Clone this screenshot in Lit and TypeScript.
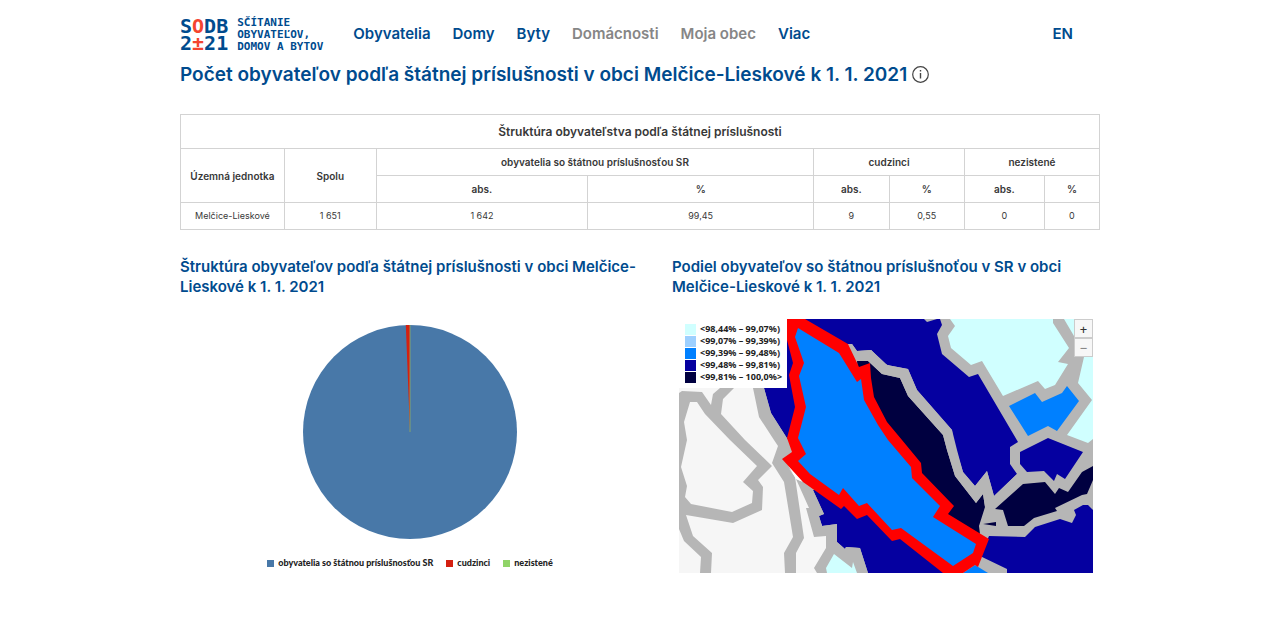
import { LitElement, html, svg, css } from "lit";
import { customElement } from "lit/decorators.js";

const NAV = [
  { label: "Obyvatelia", muted: false },
  { label: "Domy", muted: false },
  { label: "Byty", muted: false },
  { label: "Domácnosti", muted: true },
  { label: "Moja obec", muted: true },
  { label: "Viac", muted: false },
];

const SERIES = [
  { label: "obyvatelia so štátnou príslušnosťou SR", color: "#4878a8" },
  { label: "cudzinci", color: "#d42010" },
  { label: "nezistené", color: "#90d468" },
];

const CLASSES = [
  { label: "<98,44% – 99,07%)", color: "#d0ffff" },
  { label: "<99,07% – 99,39%)", color: "#9dd0ff" },
  { label: "<99,39% – 99,48%)", color: "#0080ff" },
  { label: "<99,48% – 99,81%)", color: "#0500a0" },
  { label: "<99,81% – 100,0%>", color: "#000040" },
];

// Municipality areas, painted over the border colour in this order.
const AREAS: { fill: string; points: string }[] = [
  { fill: "#f6f6f6", points: "679,388 759,388 765,415 784,445 778,458 803,483 812,510 826,530 832,545 820,573 679,573" },
  { fill: "#0500a0", points: "764,319 940,319 942,325 937,334 942,354 969,377 978,374 1018,442 1010,447 1010,464 1017,474 994,496 987,471 975,486 963,472 953,440 952,430 917,390 908,369 887,365 871,350 857,351 852,344 840,344 800,460 790,443 771,413 764,388" },
  { fill: "#0500a0", points: "813,490 850,490 960,573 868,573 860,548 846,547 845,549 837,542 837,524 822,526 819,516 824,514" },
  { fill: "#b6b6b6", points: "846,344 852,344 857,351 871,350 883,363 890,366 890,378 850,362" },
  { fill: "#000040", points: "857,361 868,361 882,374 900,378 908,396 943,435 947,450 955,476 976,503 983,494 985,507 979,526 980,534 945,520 860,390" },
  { fill: "#b6b6b6", points: "871,350 887,365 908,369 917,390 952,430 957,450 963,472 975,486 987,471 994,496 1017,474 1024,480 1023,484 995,509 985,507 983,494 976,503 955,476 947,450 943,435 908,396 900,378 882,374 868,361" },
  { fill: "#b6b6b6", points: "759,388 764,388 771,413 790,443 792,450 783,460 795,477 804,538 796,553 796,573 785,573 784,553 793,537 784,482 772,463 778,446 774,440 759,417 753,388" },
  { fill: "#b6b6b6", points: "796,479 803,482 813,490 824,514 819,516 822,526 837,524 837,542 845,549 846,547 860,548 868,573 857,573 853,562 852,568 834,554 826,568 827,573 817,573 814,568 826,548 826,536 814,537 806,508 809,508" },
  { fill: "#d0ffff", points: "834,554 852,568 853,562 857,573 827,573 826,568" },
  { fill: "#b6b6b6", points: "679,393 682,391 702,392 711,405 713,394 720,388 734,388 723,399 721,414 745,440 772,466 758,480 763,487 762,510 733,523 686,515 693,536 712,553 711,573 700,573 701,557 684,541 679,529" },
  { fill: "#f6f6f6", points: "690,402 697,402 705,414 730,440 757,466 743,482 753,491 752,503 732,512 691,504 685,497 687,486 681,467 687,440 684,422" },
  { fill: "#d0ffff", points: "950,319 955,326 948,336 951,348 971,365 982,361 1003,396 1038,381 1045,389 1055,385 1068,364 1058,362 1069,348 1053,323 1053,319" },
  { fill: "#d0ffff", points: "1064,319 1074,336 1084,357 1078,383 1092,400 1067,435 1088,443 1093,439 1093,319" },
  { fill: "#0080ff", points: "1009,406 1035,393 1042,402 1062,393 1067,386 1079,401 1057,431 1048,426 1028,436" },
  { fill: "#0500a0", points: "1020,452 1048,438 1083,452 1065,479 1057,474 1054,481 1044,471 1027,472 1020,464" },
  { fill: "#000040", points: "995,509 1023,484 1045,482 1055,494 1059,488 1068,492 1082,472 1093,466 1093,480 1087,494 1082,495 1055,508 1057,511 1034,518 1024,526 1008,526 1003,510" },
  { fill: "#000040", points: "983,524 996,522 996,526" },
  { fill: "#0500a0", points: "989,536 1025,537 1035,527 1060,519 1072,523 1076,515 1074,510 1083,505 1088,505 1093,510 1093,573 1007,573 1007,569 980,556" },
  { fill: "#b6b6b6", points: "924,319 927,322 937,319" },
  { fill: "#0080ff", points: "963,573 975,565 988,573" },
  { fill: "#ffffff", points: "785,460 803,482 796,479" },
  { fill: "#ff0000", points: "787,319 805,319 848,344 859,367 870,363 871,378 874,397 887,422 902,440 921,463 922,473 954,506 948,514 989,539 978,567 975,565 963,573 943,573 900,539 892,541 867,515 857,519 844,506 841,509 803,482 782,459 792,452 787,438 795,407 789,375 793,363 787,340" },
  { fill: "#0080ff", points: "798,328 839,353 857,382 861,379 864,400 878,425 888,440 911,467 912,478 940,506 933,517 976,544 973,553 953,566 901,528 892,530 867,503 859,506 843,488 839,495 810,474 798,461 806,454 798,438 806,407 799,376 804,363 795,337" },
];

@customElement("app-root")
export class AppRoot extends LitElement {
  static styles = css`
    :host {
      display: block;
      font-family: Inter, "Noto Sans", sans-serif;
      color: #383838;
      background: #fff;
    }
    .page {
      max-width: 920px;
      margin: 0 auto;
    }
    a {
      color: inherit;
      text-decoration: none;
    }
    header {
      display: flex;
      align-items: center;
      height: 62px;
      padding: 4px 27px 0 0;
      box-sizing: border-box;
      color: #004b8e;
      font-size: 15px;
      font-weight: 600;
    }
    .logo {
      display: flex;
      align-items: center;
      gap: 9px;
      padding-top: 4px;
      font-family: "DejaVu Sans Mono", monospace;
      font-weight: 700;
      white-space: nowrap;
    }
    .mark {
      font-size: 20px;
      line-height: 17px;
    }
    .accent {
      color: #f4452f;
    }
    .slogan {
      font-size: 11px;
      line-height: 12px;
    }
    nav {
      display: flex;
      flex: 1;
      gap: 22px;
      margin-left: 30px;
    }
    .muted {
      color: #868686;
    }
    .title {
      display: flex;
      align-items: center;
      gap: 5px;
      margin: 0 0 27px;
      height: 25px;
    }
    h1 {
      margin: 0;
      font-size: 19px;
      line-height: 25px;
      font-weight: 600;
      color: #004b8e;
    }
    .info {
      display: flex;
      padding: 0;
      border: 0;
      background: none;
    }
    table {
      width: 100%;
      table-layout: fixed;
      border-collapse: collapse;
      font-size: 10px;
      line-height: 12px;
      text-align: center;
    }
    th,
    td {
      height: 26px;
      padding: 0;
      border: 1px solid #d3d3d3;
    }
    td {
      font-size: 9px;
    }
    th {
      font-weight: 600;
    }
    .caption {
      height: 33px;
      font-size: 12px;
    }
    .w-unit { width: 11.3%; }
    .w-total { width: 10%; }
    .w-sr-abs { width: 23%; }
    .w-sr-pct { width: 24.6%; }
    .w-for-abs { width: 8.2%; }
    .w-for-pct { width: 8.2%; }
    .w-unk-abs { width: 8.7%; }
    .w-unk-pct { width: 6%; }
    .charts {
      display: grid;
      grid-template-columns: 1fr 1fr;
      margin-top: 27px;
    }
    .right {
      padding-left: 32px;
    }
    h2 {
      margin: 0 0 22px;
      font-size: 15px;
      line-height: 20px;
      font-weight: 600;
      color: #004b8e;
    }
    .chart {
      padding-top: 6px;
    }
    .pie {
      display: block;
      width: 214px;
      margin: 0 auto 18px;
    }
    .legend {
      display: flex;
      justify-content: center;
      gap: 13px;
      margin: 0;
      padding: 0;
      list-style: none;
      font: 900 9px/12px Lato, "Noto Sans", sans-serif;
      color: #222;
      white-space: nowrap;
    }
    .legend li {
      display: flex;
      align-items: center;
      gap: 4px;
    }
    .swatch {
      width: 7px;
      height: 7px;
    }
    .map {
      position: relative;
      margin: 0 7px;
    }
    .canvas {
      display: block;
      width: 100%;
    }
    .classes {
      position: absolute;
      top: 0;
      left: 0;
      margin: 0;
      padding: 4px 5px 5px 6px;
      list-style: none;
      background: #fff;
      font: 700 9px/12px "Noto Sans", sans-serif;
      color: #222;
      white-space: nowrap;
    }
    .classes li {
      display: flex;
      align-items: center;
      gap: 4px;
    }
    .box {
      width: 11px;
      height: 11px;
    }
    .zoom {
      position: absolute;
      top: 0;
      right: 0;
      display: flex;
      flex-direction: column;
    }
    .zoom button {
      display: flex;
      align-items: center;
      justify-content: center;
      width: 19px;
      height: 19px;
      padding: 0;
      border: 1px solid #ccc;
      background: #f7f7f7;
      color: #333;
      font: 500 13px/16px "Noto Sans", sans-serif;
    }
    .zoom .off {
      color: #888;
    }
  `;

  render() {
    return html`
      <div class="page">
        <header>
          <a class="logo" href="#">
            <span class="mark">S<span class="accent">O</span>DB<br />2<span class="accent">±</span>21</span>
            <span class="slogan">SČÍTANIE<br />OBYVATEĽOV,<br />DOMOV A BYTOV</span>
          </a>
          <nav>
            ${NAV.map((n) => html`<a href="#" class=${n.muted ? "muted" : ""}>${n.label}</a>`)}
          </nav>
          <a href="#">EN</a>
        </header>
        <main>
          <div class="title">
            <h1>Počet obyvateľov podľa štátnej príslušnosti v obci Melčice-Lieskové k 1. 1. 2021</h1>
            <button class="info" aria-label="Info">
              <svg width="17" height="17" viewBox="0 0 17 17" fill="none" stroke="#444">
                <circle cx="8.5" cy="8.5" r="7.8" stroke-width="1.2" />
                <path d="M8.5 7v5.5M8.5 4v1.6" stroke-width="1.4" />
              </svg>
            </button>
          </div>
          <table>
            <colgroup>
              <col class="w-unit" /><col class="w-total" /><col class="w-sr-abs" /><col class="w-sr-pct" />
              <col class="w-for-abs" /><col class="w-for-pct" /><col class="w-unk-abs" /><col class="w-unk-pct" />
            </colgroup>
            <thead>
              <tr><th class="caption" colspan="8">Štruktúra obyvateľstva podľa štátnej príslušnosti</th></tr>
              <tr>
                <th rowspan="2">Územná jednotka</th>
                <th rowspan="2">Spolu</th>
                <th colspan="2">obyvatelia so štátnou príslušnosťou SR</th>
                <th colspan="2">cudzinci</th>
                <th colspan="2">nezistené</th>
              </tr>
              <tr>${["abs.", "%", "abs.", "%", "abs.", "%"].map((t) => html`<th>${t}</th>`)}</tr>
            </thead>
            <tbody>
              <tr>
                ${["Melčice-Lieskové", "1 651", "1 642", "99,45", "9", "0,55", "0", "0"].map((t) => html`<td>${t}</td>`)}
              </tr>
            </tbody>
          </table>
          <div class="charts">
            <section>
              <h2>Štruktúra obyvateľov podľa štátnej príslušnosti v obci Melčice-Lieskové k 1. 1. 2021</h2>
              <div class="chart">
                <svg class="pie" viewBox="0 0 214 214">
                  <circle cx="107" cy="107" r="107" fill="#4878a8" />
                  <path d="M107 107L102.8 0.1A107 107 0 0 1 107 0Z" fill="#d42010" />
                  <path d="M107 0V107" stroke="#8fae62" stroke-width="0.8" />
                </svg>
                <ul class="legend">
                  ${SERIES.map(
                    (s) => html`<li><svg class="swatch" viewBox="0 0 7 7"><rect width="7" height="7" fill=${s.color} /></svg>${s.label}</li>`
                  )}
                </ul>
              </div>
            </section>
            <section class="right">
              <h2>Podiel obyvateľov so štátnou príslušnoťou v SR v obci Melčice-Lieskové k 1. 1. 2021</h2>
              <div class="map">
                <svg class="canvas" viewBox="679 319 414 254">
                  <rect x="679" y="319" width="414" height="254" fill="#b6b6b6" />
                  ${AREAS.map((a) => svg`<polygon points=${a.points} fill=${a.fill} />`)}
                </svg>
                <ul class="classes">
                  ${CLASSES.map(
                    (c) => html`<li><svg class="box" viewBox="0 0 11 11"><rect width="11" height="11" fill=${c.color} /></svg>${c.label}</li>`
                  )}
                </ul>
                <div class="zoom">
                  <button aria-label="Priblížiť">+</button>
                  <button class="off" aria-label="Oddialiť">−</button>
                </div>
              </div>
            </section>
          </div>
        </main>
      </div>
    `;
  }
}
